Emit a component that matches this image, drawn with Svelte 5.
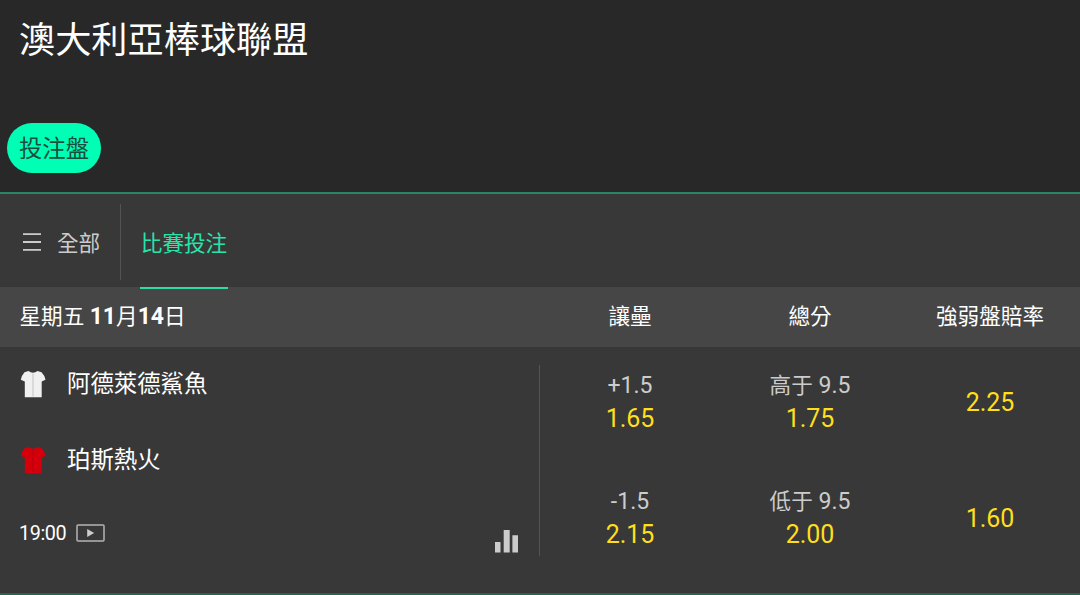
<script>
  const teams = [
    { name: '阿德萊德鯊魚', shirt: '#f0f0f0', seam: '#c4c4c4' },
    { name: '珀斯熱火', shirt: '#d3000c', seam: '#b5000c' },
  ];

  const markets = [
    {
      title: '讓壘',
      odds: [
        { line: '+1.5', price: '1.65' },
        { line: '-1.5', price: '2.15' },
      ],
    },
    {
      title: '總分',
      odds: [
        { side: '高于', line: '9.5', price: '1.75' },
        { side: '低于', line: '9.5', price: '2.00' },
      ],
    },
    { title: '強弱盤賠率', odds: [{ price: '2.25' }, { price: '1.60' }] },
  ];
</script>

<div class="page">
  <header>
    <h1>澳大利亞棒球聯盟</h1>
    <button type="button" class="pill">投注盤</button>
  </header>

  <nav>
    <button type="button" class="all">
      <svg width="18" height="18" viewBox="0 0 18 18">
        <path d="M0 1.2h18M0 9h18M0 16.8h18" stroke="#ccc" stroke-width="1.8" />
      </svg>
      <span>全部</span>
    </button>
    <button type="button" class="tab">比賽投注</button>
  </nav>

  <div class="heading">
    <div class="date">星期五 <b>11</b>月<b>14</b>日</div>
    {#each markets as market}
      <div class="market-title">{market.title}</div>
    {/each}
  </div>

  <div class="fixture">
    <div class="info">
      {#each teams as team}
        <div class="team">
          <svg width="26" height="28" viewBox="0 0 26 28">
            <path
              d="M8.5 1 Q13 4.5 17.5 1 L21.5 2.2 Q24.5 5 25.5 9.8 L21.7 11.4 V27.3 H4.8 V11.4 L0.8 9.8 Q1.8 5 4.5 2.2 Z"
              fill={team.shirt}
            />
            <path d="M13 3.5V26.5" stroke={team.seam} />
          </svg>
          <span>{team.name}</span>
        </div>
      {/each}
      <div class="meta">
        <span class="time">19:00</span>
        <svg width="29" height="18" viewBox="0 0 29 18">
          <rect x="1" y="1" width="27" height="16" rx="1" fill="none" stroke="#b4b4b4" stroke-width="1.5" />
          <path d="M11.2 5v8l7-4z" fill="#ccc" />
        </svg>
        <svg class="stats" width="24" height="24" viewBox="0 0 24 24">
          <path d="M0 13h5.5v10.5H0zM8.7 1h6v22.5h-6zM17.4 6.2h5.6v17.3h-5.6z" fill="#ccc" />
        </svg>
      </div>
    </div>
    {#each markets as market}
      <div class="market">
        {#each market.odds as odd}
          <div class="odd">
            {#if odd.line}
              <span class="line">
                {#if odd.side}<span class="side">{odd.side}</span>{/if}
                {odd.line}
              </span>
            {/if}
            <span class="price">{odd.price}</span>
          </div>
        {/each}
      </div>
    {/each}
  </div>
</div>

<style>
  :global(body) {
    background: #383838;
  }
  .page {
    width: 1080px;
    height: 595px;
    box-sizing: border-box;
    overflow: hidden;
    display: flex;
    flex-direction: column;
    background: #383838;
    border-bottom: 2px solid #28634f;
    color: #fff;
    font-family: Roboto, "Noto Sans CJK TC", sans-serif;
    font-size: 21.6px;
  }
  button {
    border: 0;
    background: none;
    color: inherit;
    font: inherit;
    padding: 0;
    cursor: pointer;
  }
  header {
    height: 192px;
    flex: none;
    background: #282828;
  }
  h1 {
    margin: 0;
    padding: 15px 0 0 19px;
    font-size: 36.2px;
    font-weight: 400;
    line-height: 52px;
  }
  .pill {
    display: block;
    width: 94px;
    height: 50px;
    margin: 56px 0 0 7px;
    border-radius: 25px;
    background: #00ffb5;
    color: #184f3e;
    font-size: 23.4px;
    line-height: 52px;
  }
  nav {
    height: 93px;
    flex: none;
    display: flex;
    border-top: 2px solid #288664;
  }
  .all {
    display: flex;
    align-items: center;
    gap: 16px;
    width: 121px;
    height: 76px;
    margin-top: 10px;
    padding-left: 23px;
    box-sizing: border-box;
    border-right: 1px solid #545454;
    color: #ccc;
  }
  .all span {
    margin-top: -2px;
  }
  .tab {
    height: 95px;
    margin-left: 19px;
    padding: 1px 0 0;
    border-bottom: 2px solid #2ddca5;
    color: #26e5aa;
    box-sizing: border-box;
    width: 88px;
    z-index: 1;
  }
  .heading {
    height: 60px;
    flex: none;
    display: grid;
    grid-template-columns: 540px repeat(3, 180px);
    line-height: 59px;
    background: #464646;
  }
  .date {
    padding-left: 19.5px;
  }
  .date b {
    font-size: 23px;
    line-height: 1;
  }
  .market-title {
    text-align: center;
  }
  .fixture {
    flex: 1;
    display: grid;
    grid-template-columns: 540px repeat(3, 180px);
  }
  .info {
    height: 191px;
    margin-top: 18px;
    padding: 0 20px;
    border-right: 1px solid #545454;
    box-sizing: border-box;
  }
  .team {
    display: flex;
    align-items: center;
    gap: 21px;
    height: 38px;
    margin-bottom: 38px;
    font-size: 23.4px;
    line-height: 38px;
  }
  .meta {
    display: flex;
    align-items: center;
    height: 32px;
    gap: 12px;
  }
  .time {
    font-size: 19.8px;
    width: 45px;
    margin-left: -1px;
    white-space: nowrap;
    letter-spacing: -0.4px;
  }
  .stats {
    margin: 15px 0 0 auto;
  }
  .market {
    display: grid;
    grid-template-rows: 116px 116px;
    height: 232px;
    margin-top: -3px;
  }
  .odd {
    display: flex;
    flex-direction: column;
    align-items: center;
    justify-content: center;
  }
  .line {
    color: #ccc;
    font-size: 23px;
    line-height: 33px;
  }
  .side {
    font-size: 21.6px;
    line-height: 1;
  }
  .price {
    color: #ffdf1b;
    font-size: 25px;
    line-height: 33px;
  }
</style>
